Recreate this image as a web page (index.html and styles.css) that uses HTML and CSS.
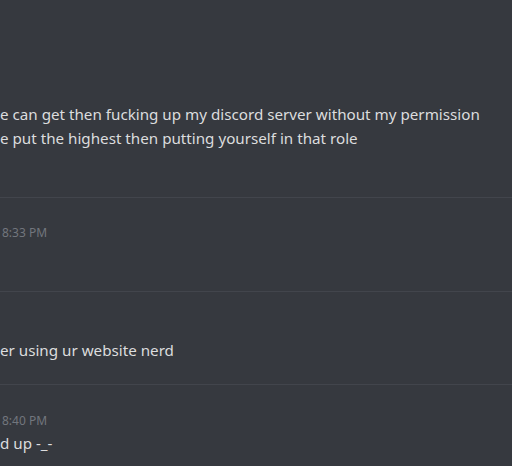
FILE: index.html
```html
<!DOCTYPE html>
<html>
<head>
<meta charset="utf-8">
<link rel="stylesheet" href="styles.css">
</head>
<body>
<div class="chat">
  <section class="group g1">
    <p class="msg">e can get then fucking up my discord server without my permission</p>
    <p class="msg">e put the highest then putting yourself in that role</p>
  </section>
  <section class="group g2">
    <span class="time">8:33 PM</span>
  </section>
  <section class="group g3">
    <p class="msg">er using ur website nerd</p>
  </section>
  <section class="group g4">
    <span class="time">8:40 PM</span>
    <p class="msg">d up -_-</p>
  </section>
</div>
</body>
</html>
```
FILE: styles.css
```css
html, body {
  margin: 0;
  padding: 0;
  background: #36393f;
  height: 100%;
  overflow: hidden;
}
.chat {
  font-family: "Noto Sans", "Open Sans", sans-serif;
  color: #dcddde;
  display: flex;
  flex-direction: column;
}
.group {
  display: flex;
  flex-direction: column;
}
.group + .group {
  border-top: 1px solid #42454c;
}
.msg {
  margin: 0;
  font-size: 15.2px;
  line-height: 24px;
  white-space: nowrap;
}
.time {
  font-size: 12px;
  line-height: 16px;
  color: #72767d;
  padding-left: 2px;
}
.g1 { padding: 102px 0 47px; }
.g2 { padding: 27px 0 50px; }
.g3 { padding: 46px 0 22px; }
.g4 { padding: 28px 0 20px; }
.g4 .msg { margin-top: 2px; }
```
